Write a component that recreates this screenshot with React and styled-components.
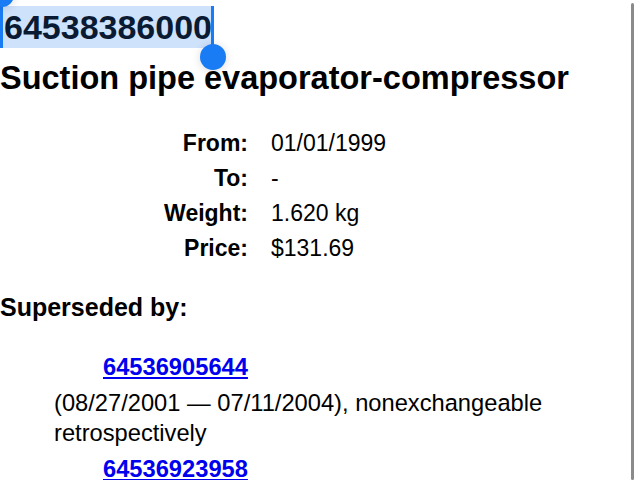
import { Fragment } from 'react';
import styled, { createGlobalStyle } from 'styled-components';

const GlobalStyle = createGlobalStyle`
  html, body {
    margin: 0;
    padding: 0;
    background: #ffffff;
    overflow: hidden;
  }
  body {
    font-family: "Liberation Sans", Arial, Helvetica, sans-serif;
    color: #000000;
  }
`

const Page = styled.main`
  padding-top: 6px;
  display: flex;
  flex-direction: column;
`
const NumberLine = styled.div`
  position: relative;
  height: 42px;
`
const PartNumber = styled.span`
  display: inline-block;
  height: 42px;
  line-height: 43px;
  padding: 0 1px 0 4px;
  font-size: 34px;
  font-weight: bold;
  color: #0b1a33;
  background: #cfe2fb;
`
const Caret = styled.span`
  position: absolute;
  top: 0;
  left: ${p => p.$left}px;
  width: 3px;
  height: ${p => p.$height}px;
  background: #1a7cf5;
`
const Knob = styled.span`
  position: absolute;
  left: ${p => p.$x - p.$r}px;
  top: ${p => p.$y - p.$r}px;
  width: ${p => p.$r * 2}px;
  height: ${p => p.$r * 2}px;
  border-radius: 50%;
  background: #1a7cf5;
  box-shadow: 0 1px 10px rgba(0, 0, 0, 0.14);
  z-index: 2;
`
const Title = styled.h1`
  margin: 10px 0 0;
  font-size: 32.5px;
  line-height: 40px;
  font-weight: bold;
  white-space: nowrap;
`
const SpecGrid = styled.dl`
  margin: 28px 0 0;
  display: grid;
  grid-template-columns: 248px auto;
  column-gap: 23px;
  font-size: 23px;
  line-height: 35px;
`
const SpecLabel = styled.dt`
  font-weight: bold;
  text-align: right;
`
const SpecValue = styled.dd`
  margin: 0;
`
const SectionTitle = styled.h2`
  margin: 26px 0 0;
  font-size: 25px;
  line-height: 30px;
  font-weight: bold;
`
const SupersedeList = styled.ul`
  margin: 30px 0 0;
  padding: 0;
  list-style: none;
  display: flex;
  flex-direction: column;
  gap: 6px;
  font-size: 23.7px;
  line-height: 30px;
`
const SupersedeItem = styled.li`
  display: flex;
  flex-direction: column;
  gap: 6px;
`
const PartLink = styled.a`
  padding-left: 103px;
  font-weight: bold;
  color: #0000ee;
  text-decoration: underline;
  text-underline-offset: 2px;
`
const Note = styled.p`
  margin: 0;
  padding: 0 80px 0 54px;
`
const ScrollIndicator = styled.div`
  position: fixed;
  top: 3px;
  bottom: 0;
  right: 6px;
  width: 3px;
  border-radius: 2px;
  background: #8b8b8b;
`

const specs = [
  ['From:', '01/01/1999'],
  ['To:', '-'],
  ['Weight:', '1.620 kg'],
  ['Price:', '$131.69'],
]

const replacements = [
  { part: '64536905644', note: '(08/27/2001 \u2014 07/11/2004), nonexchangeable retrospectively' },
  { part: '64536923958', note: '' },
]

const App = () => {
  return (
    <>
      <GlobalStyle />
      <Page>
        <NumberLine>
          <PartNumber>64538386000</PartNumber>
          <Caret $left={0} $height={42} />
          <Knob $x={1.5} $y={-11} $r={12} />
          <Caret $left={211} $height={46} />
          <Knob $x={213} $y={51} $r={13} />
        </NumberLine>
        <Title>Suction pipe evaporator-compressor</Title>
        <SpecGrid>
          {specs.map(([label, value]) => (
            <Fragment key={label}>
              <SpecLabel>{label}</SpecLabel>
              <SpecValue>{value}</SpecValue>
            </Fragment>
          ))}
        </SpecGrid>
        <SectionTitle>Superseded by:</SectionTitle>
        <SupersedeList>
          {replacements.map(r => (
            <SupersedeItem key={r.part}>
              <PartLink href="#">{r.part}</PartLink>
              {r.note && <Note>{r.note}</Note>}
            </SupersedeItem>
          ))}
        </SupersedeList>
      </Page>
      <ScrollIndicator />
    </>
  );
}

export default App
